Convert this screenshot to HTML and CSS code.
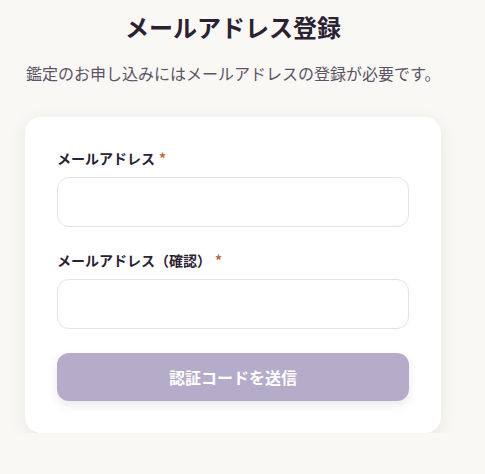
FILE: index.html
```html
<!DOCTYPE html>
<html lang="ja">
<head>
<meta charset="utf-8">
<title>メールアドレス登録</title>
<link rel="stylesheet" href="styles.css">
</head>
<body>
<main class="page">
  <h1 class="title">メールアドレス登録</h1>
  <p class="lead">鑑定のお申し込みにはメールアドレスの登録が必要です。</p>
  <form class="card">
    <div class="field">
      <label class="label" for="email">メールアドレス<span class="req">*</span></label>
      <input class="input" id="email" type="email">
    </div>
    <div class="field">
      <label class="label" for="email2">メールアドレス（確認）<span class="req">*</span></label>
      <input class="input" id="email2" type="email">
    </div>
    <button class="btn" type="button">認証コードを送信</button>
  </form>
</main>
</body>
</html>
```

FILE: styles.css
```css
html, body {
  margin: 0;
  padding: 0;
  background: #faf8f5;
}
body {
  font-family: "Noto Sans CJK JP", "Noto Sans", sans-serif;
  color: #2a2233;
}
.page {
  width: 416px;
  margin-left: 25px;
  padding-top: 9px;
}
.title {
  margin: 0;
  font-size: 24px;
  line-height: 36px;
  font-weight: 700;
  text-align: center;
  color: #2a2233;
}
.lead {
  margin: 16px 0 0 1px;
  font-size: 16px;
  line-height: 24px;
  color: #5c5465;
}
.card {
  margin-top: 32px;
  background: #ffffff;
  border-radius: 16px;
  padding: 30px 32px 32px;
  box-shadow: 0 4px 16px rgba(60, 50, 40, 0.09);
  display: flex;
  flex-direction: column;
}
.field {
  display: flex;
  flex-direction: column;
  gap: 8px;
  margin-bottom: 22px;
}
.field + .field {
  margin-bottom: 24px;
}
.label {
  font-size: 14px;
  line-height: 22px;
  font-weight: 700;
  color: #2a2233;
}
.req {
  color: #b8683a;
  margin-left: 4px;
}
.input {
  box-sizing: border-box;
  height: 50px;
  width: 100%;
  border: 1px solid #e4e2ea;
  border-radius: 12px;
  background: #fff;
  font: inherit;
  padding: 0 14px;
}
.btn {
  height: 48px;
  margin-top: 0;
  border: none;
  border-radius: 12px;
  background: #b5acc9;
  color: #ffffff;
  font-family: inherit;
  font-size: 16px;
  font-weight: 700;
  box-shadow: 0 4px 10px rgba(80, 70, 110, 0.12);
}
```
